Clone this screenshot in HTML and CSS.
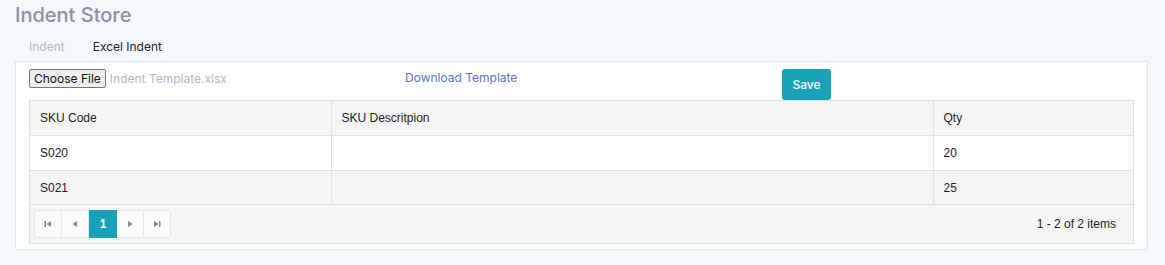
FILE: index.html
```html
<!DOCTYPE html>
<html lang="en">
<head>
  <meta charset="UTF-8">
  <title>Indent Store</title>
  <link rel="stylesheet" href="styles.css">
</head>
<body>

  <h1 class="page-title">Indent Store</h1>

  <nav class="tabs">
    <span class="tab">Indent</span>
    <span class="tab tab-active">Excel Indent</span>
  </nav>

  <main class="card">
    <div class="toolbar">
      <div class="file-pick">
        <span class="file-btn">Choose File</span>
        <span class="file-name">Indent Template.xlsx</span>
      </div>
      <a class="download" href="#">Download Template</a>
      <button class="btn-save">Save</button>
    </div>

    <div class="grid">
      <table>
        <colgroup>
          <col class="col-code">
          <col class="col-desc">
          <col class="col-qty">
        </colgroup>
        <thead>
          <tr>
            <th>SKU Code</th>
            <th>SKU Descritpion</th>
            <th>Qty</th>
          </tr>
        </thead>
        <tbody>
          <tr>
            <td>S020</td>
            <td></td>
            <td>20</td>
          </tr>
          <tr class="alt">
            <td>S021</td>
            <td></td>
            <td>25</td>
          </tr>
        </tbody>
      </table>

      <!-- pager -->
      <div class="pager">
        <div class="pager-nums">
          <span class="pg">
            <svg width="8" height="8" viewBox="0 0 8 8"><rect x="0.5" y="1" width="1.6" height="6" fill="#888"/><path d="M7 1 L2.5 4 L7 7 Z" fill="#888"/></svg>
          </span>
          <span class="pg">
            <svg width="8" height="8" viewBox="0 0 8 8"><path d="M6 1 L1.5 4 L6 7 Z" fill="#888"/></svg>
          </span>
          <span class="pg pg-active">1</span>
          <span class="pg">
            <svg width="8" height="8" viewBox="0 0 8 8"><path d="M2 1 L6.5 4 L2 7 Z" fill="#888"/></svg>
          </span>
          <span class="pg">
            <svg width="8" height="8" viewBox="0 0 8 8"><path d="M1 1 L5.5 4 L1 7 Z" fill="#888"/><rect x="5.9" y="1" width="1.6" height="6" fill="#888"/></svg>
          </span>
        </div>
        <span class="pager-info">1 - 2 of 2 items</span>
      </div>
    </div>
  </main>

</body>
</html>
```

FILE: styles.css
```css
body {
  margin: 0;
  padding: 0 17px 0 15px;
  background: #f4f7fc;
  font-family: "Inter", "Open Sans", sans-serif;
}

.page-title {
  margin: 0;
  padding-top: 2px;
  font-size: 20px;
  font-weight: 500;
  line-height: 26px;
  color: #8d90a6;
}

.tabs {
  display: flex;
  padding: 10px 0 0 14px;
  height: 23px;
  border-bottom: 1px solid #e2e6ee;
  font-size: 12px;
  line-height: 17px;
}

.tab {
  margin-right: 28px;
  color: #b6b8c2;
}

.tab-active {
  color: #1e2230;
}

.card {
  background: white;
  border: 1px solid #e3e3e3;
  border-top: none;
  border-radius: 0 0 3px 3px;
  padding: 7px 13px 5px 13px;
}

.toolbar {
  display: flex;
  align-items: flex-start;
  height: 31px;
}

.file-pick {
  display: flex;
  align-items: center;
  width: 290px;
  margin-right: 86px;
}

.file-btn {
  font-family: "Inter", sans-serif;
  font-size: 12px;
  color: #111;
  background: #efefef;
  border: 1px solid #767676;
  border-radius: 2px;
  padding: 1px 4px;
  line-height: 15px;
}

.file-name {
  margin-left: 4px;
  font-size: 12px;
  color: #b4b7c3;
}

.download {
  margin-top: 1px;
  font-size: 12px;
  color: #5c6fd4;
  text-decoration: none;
  width: 377px;
}

.btn-save {
  font-family: "Inter", sans-serif;
  font-size: 12px;
  font-weight: 500;
  color: white;
  background: #17a2b8;
  border: none;
  border-radius: 3px;
  width: 49px;
  height: 31px;
  margin: 0;
  padding: 0;
}

.grid {
  border: 1px solid #e0e0e0;
  background: #f5f5f7;
}

table {
  width: 100%;
  border-collapse: collapse;
  font-family: "Liberation Sans", Arial, sans-serif;
  font-size: 12px;
  color: #222;
}

.col-code { width: 301px; }
.col-desc { width: 602px; }

th, td {
  text-align: left;
  padding: 0 10px;
  height: 34px;
  border-right: 1px solid #e0e0e0;
  border-bottom: 1px solid #e0e0e0;
}

tbody tr.alt td {
  height: 33px;
}

th:last-child, td:last-child {
  border-right: none;
}

th {
  font-weight: normal;
  background: #f5f5f7;
}

tbody tr {
  background: white;
}

tbody tr.alt {
  background: #f5f5f5;
}

.pager {
  display: flex;
  align-items: center;
  justify-content: space-between;
  height: 38px;
  padding: 0 17px 0 4px;
  font-family: "Liberation Sans", Arial, sans-serif;
  font-size: 12px;
  color: #222;
}

.pager-nums {
  display: flex;
  border: 1px solid #e6e6e6;
  border-radius: 3px;
  background: #fafafa;
  height: 26px;
}

.pg {
  width: 26px;
  display: flex;
  align-items: center;
  justify-content: center;
  border-right: 1px solid #e6e6e6;
}

.pg:last-child {
  border-right: none;
}

.pg-active {
  background: #17a2b8;
  color: white;
  font-weight: bold;
  width: 28px;
  margin: -1px 0;
  border-right: none;
}
```
